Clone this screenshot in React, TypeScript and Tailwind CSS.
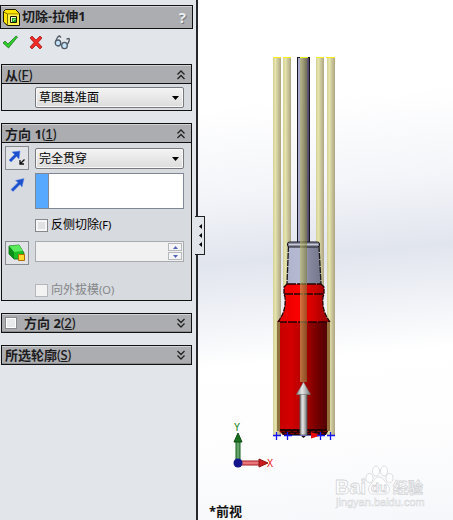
import { useState } from "react";
import type { ReactNode } from "react";

interface SectionProps {
  title: string;
  accessKey: string;
  open: boolean;
  onToggle: () => void;
  checkbox?: boolean;
  children?: ReactNode;
}

function Chevrons({ up }: { up: boolean }) {
  return (
    <svg className="h-[10px] w-[8px]" viewBox="0 0 8 10" fill="none" stroke="#222" strokeWidth="1.3">
      {up ? (
        <path d="M.5 4.5 4 1l3.5 3.5M.5 9 4 5.500l3.500 3.500" />
      ) : (
        <path d="M.5 1 4 4.500 7.500 1M.5 5.500 4 9l3.500-3.500" />
      )}
    </svg>
  );
}

function Section({ title, accessKey, open, onToggle, checkbox, children }: SectionProps) {
  return (
    <section className="border border-[#111] bg-[#d7dade]">
      <div
        className={`flex items-center border-t border-b border-t-[#d0d2d5] bg-[#abadb0] pr-[6px] ${
          open ? "h-[19px] border-b-[#111]" : "h-[18px] border-b-[#8b8d90]"
        }`}
      >
        {checkbox && (
          <input
            type="checkbox"
            aria-label={`${title}(${accessKey})`}
            className="mr-1 ml-[3px] size-[12px] appearance-none border border-[#898b8e] bg-[#e8eaec] shadow-[inset_0_0_0_1px_#fff]"
          />
        )}
        <button
          type="button"
          aria-expanded={open}
          onClick={onToggle}
          className="flex flex-1 items-center justify-between pl-[3px] text-left"
        >
          <span className="text-[13px] leading-[16px] font-bold whitespace-nowrap">
            {title}
            <span className="font-['Lato'] font-semibold">
              (<u>{accessKey}</u>)
            </span>
          </span>
          <Chevrons up={open} />
        </button>
      </div>
      {open && children}
    </section>
  );
}

function Combo({ label, value }: { label: string; value: string }) {
  return (
    <div className="relative min-w-0">
      <select
        aria-label={label}
        className="block h-[21px] w-full appearance-none rounded-[2px] border border-[#77797c] bg-linear-to-b from-[#f4f4f4] to-[#dcdcdc] pl-[3px] text-[12px] leading-[18px] text-black shadow-[inset_0_0_0_1px_#f8f8f8]"
      >
        <option>{value}</option>
      </select>
      <svg className="pointer-events-none absolute top-[9px] right-[5px] h-[4px] w-[7px]" viewBox="0 0 7 4">
        <path d="M0 0h7L3.500 4z" />
      </svg>
    </div>
  );
}

function CutIcon() {
  return (
    <svg className="size-[17px]" viewBox="0 0 17 17">
      <path d="M.5 2.500 2.500.5h10l4 4v12h-12l-4-3.500z" fill="#ffe400" stroke="#1b1800" />
      <path d="M1 3 4.500 5v11M4.500 5h11.500" fill="none" stroke="#7a6a00" />
      <path d="M5 5.500h11v10.500H5z" fill="#fff04a" />
      <path d="M7.500 7.500h6v6h-6z" fill="#f8f6c8" stroke="#151500" />
      <path d="M9 9h4v4H9z" fill="#1f9a28" />
      <path d="M10.500 12v-1.500h2" fill="none" stroke="#8cf08c" />
    </svg>
  );
}

function FlipIcon() {
  return (
    <svg className="size-[18px]" viewBox="0 0 18 18">
      <path d="M1 11 6.500 5.500 4 3l8-1-1 8-2.500-2.500L3 13z" fill="#1c50cc" stroke="#5c86e6" strokeWidth=".5" />
      <path d="m16.500 10.500-4 4m-.5-3.500v4h4" fill="none" stroke="#111" strokeWidth="1.300" />
    </svg>
  );
}

function ArrowIcon() {
  return (
    <svg className="size-[15px]" viewBox="0 0 15 15">
      <path d="M1 12.500 8 5.500 5.500 3.500l8.500-2-2 8.500-2-2.500L3 14.500z" fill="#1c50cc" stroke="#5c86e6" strokeWidth=".5" />
    </svg>
  );
}

function DraftIcon() {
  return (
    <svg className="size-[18px]" viewBox="0 0 18 18">
      <path d="M1 2 11 1l5 8-1 6H6L1 10z" fill="#1cbd24" stroke="#0b6310" strokeWidth=".8" />
      <path d="m1 2 5 6 9-1-4-6z" fill="#5bea5e" />
      <path d="M6 8v7L1 10V2z" fill="#0b8f18" />
      <path d="M10.500 10.500h6v6h-6z" fill="#ffd92e" stroke="#b06d00" />
    </svg>
  );
}

function PropertyPanel() {
  const [open, setOpen] = useState({ from: true, dir1: true, dir2: false, contours: false });
  const toggle = (key: keyof typeof open) => setOpen({ ...open, [key]: !open[key] });

  return (
    <aside className="w-[198px] shrink-0 border-r-2 border-[#26272b] bg-[#e2e5ea] pt-[5px] pr-[3px]">
      <header className="flex h-[24px] items-center border border-[#111] bg-[#abadb0] pr-[6px] pl-[2px] shadow-[inset_0_1px_0_#cfd1d4]">
        <CutIcon />
        <h1 className="flex-1 pl-[2px] text-[13px] font-bold">切除-拉伸1</h1>
        <button
          type="button"
          aria-label="帮助"
          className="text-[15px] leading-[18px] font-bold text-[#eceef0] [text-shadow:1px_1px_0_#77797c]"
        >
          ?
        </button>
      </header>

      {/* OK / cancel / preview */}
      <div className="flex h-[35px] items-start gap-[11px] pt-[6px] pl-[2px]">
        <button type="button" aria-label="确定">
          <svg className="h-[15px] w-[16px]" viewBox="0 0 16 15">
            <path d="m1 8 2-2 3 3 8-8 1.500 1L6.500 13z" fill="#2fd02c" stroke="#126b16" strokeWidth=".7" strokeLinejoin="round" />
          </svg>
        </button>
        <button type="button" aria-label="取消">
          <svg className="h-[15px] w-[14px]" viewBox="0 0 14 15">
            <path
              d="m1 3 2-2 4 4 4-4 2 2-4 4.500 4 4.500-2 2-4-4-4 4-2-2 4-4.500z"
              fill="#ef2a25"
              stroke="#9b1110"
              strokeWidth=".7"
              strokeLinejoin="round"
            />
          </svg>
        </button>
        <button type="button" aria-label="细节预览">
          <svg className="h-[15px] w-[17px]" viewBox="0 0 17 15" fill="none" stroke="#505b66" strokeWidth="1.300">
            <path d="M1.500 8C2 4 4 1 5.500 1L7 2.500M13 10c2-3 3-6 2-6.500L12.500 4M6.500 9l2 1" />
            <ellipse cx="4" cy="8" rx="2.700" ry="3" fill="#c3e4fb" />
            <ellipse cx="10.500" cy="10.500" rx="2.800" ry="3.200" fill="#c3e4fb" />
          </svg>
        </button>
      </div>

      <div className="flex flex-col gap-[12px] px-px">
        <Section title="从" accessKey="F" open={open.from} onToggle={() => toggle("from")}>
          <div className="pt-[3px] pr-[7px] pb-[2px] pl-[33px]">
            <Combo label="从" value="草图基准面" />
          </div>
        </Section>

        <Section title="方向 1" accessKey="1" open={open.dir1} onToggle={() => toggle("dir1")}>
          <div className="grid grid-cols-[24px_minmax(0,1fr)] gap-x-[6px] pt-[3px] pr-[7px] pb-px pl-[3px]">
            <button
              type="button"
              aria-label="反向"
              className="flex size-[24px] items-center justify-center border border-[#888b90] bg-[#e1e3e7]"
            >
              <FlipIcon />
            </button>
            <div className="pt-[2px]">
              <Combo label="终止条件" value="完全贯穿" />
            </div>

            <div className="flex justify-center pt-[7px]">
              <ArrowIcon />
            </div>
            <div className="mt-[3px] flex h-[36px] border border-[#7f8794] bg-white">
              <span className="w-[13px] border-r border-[#7f8794] bg-[#56a9ff]" />
              <textarea aria-label="拉伸方向" className="min-w-0 flex-1 resize-none outline-none" />
            </div>

            <label className="col-start-2 mt-[7px] flex h-[18px] items-center gap-[3px] text-[12px] text-black">
              <input
                type="checkbox"
                className="size-[13px] appearance-none border border-[#85888c] bg-[#dfe1e4] shadow-[inset_0_0_0_2px_#f6f6f6]"
              />
              <span>
                反侧切除<span className="text-[11px]">(F)</span>
              </span>
            </label>

            <button
              type="button"
              aria-label="拔模开/关"
              className="mt-[7px] flex size-[24px] items-center justify-center border border-[#888b90] bg-[#e1e3e7]"
            >
              <DraftIcon />
            </button>
            <div className="mt-[7px] flex h-[21px] border border-[#a8abae] bg-[#f1f1f1] p-px">
              <input aria-label="拔模角度" disabled className="min-w-0 flex-1" />
              <div className="flex w-[14px] flex-col gap-px">
                <button type="button" aria-label="增加" className="flex flex-1 items-center justify-center border border-[#b5b8bc] bg-[#f5f5f5]">
                  <svg className="h-[3px] w-[5px]" viewBox="0 0 5 3">
                    <path d="M0 3h5L2.500 0z" fill="#5366b5" />
                  </svg>
                </button>
                <button type="button" aria-label="减少" className="flex flex-1 items-center justify-center border border-[#b5b8bc] bg-[#f5f5f5]">
                  <svg className="h-[3px] w-[5px]" viewBox="0 0 5 3">
                    <path d="M0 0h5L2.500 3z" fill="#5366b5" />
                  </svg>
                </button>
              </div>
            </div>

            <label className="col-start-2 mt-[16px] flex h-[18px] items-center gap-[3px] text-[12px] text-[#85878a]">
              <input type="checkbox" disabled className="size-[13px] appearance-none border border-[#b5b7ba] bg-[#f3f3f3]" />
              <span>
                向外拔模<span className="text-[11px]">(O)</span>
              </span>
            </label>
          </div>
        </Section>

        <Section title="方向 2" accessKey="2" checkbox open={open.dir2} onToggle={() => toggle("dir2")} />
        <Section title="所选轮廓" accessKey="S" open={open.contours} onToggle={() => toggle("contours")} />
      </div>
    </aside>
  );
}

const outerRods = [273, 327];
const innerRods = [283, 316];
const sketchPoints = [277, 288, 321, 331];

function Viewport() {
  return (
    <svg className="block h-full w-full" viewBox="198 0 255 520" preserveAspectRatio="xMidYMin meet">
      <defs>
        <linearGradient id="rod">
          <stop offset="0" stopColor="#d1cf97" />
          <stop offset=".3" stopColor="#e6e5ac" />
          <stop offset=".6" stopColor="#cbc79a" />
          <stop offset="1" stopColor="#ada383" />
        </linearGradient>
        <linearGradient id="shaft">
          <stop offset="0" stopColor="#b2b2d8" />
          <stop offset=".5" stopColor="#8d8da8" />
          <stop offset="1" stopColor="#4b4268" />
        </linearGradient>
        <linearGradient id="cut">
          <stop offset="0" stopColor="#c2c068" />
          <stop offset="1" stopColor="#7c7a38" />
        </linearGradient>
        <linearGradient id="collar">
          <stop offset="0" stopColor="#b0b4cc" />
          <stop offset=".35" stopColor="#b5b9d2" />
          <stop offset=".65" stopColor="#85889f" />
          <stop offset="1" stopColor="#75778c" />
        </linearGradient>
        <linearGradient id="neck">
          <stop offset="0" stopColor="#e00000" />
          <stop offset=".4" stopColor="#fb0000" />
          <stop offset=".7" stopColor="#d00000" />
          <stop offset="1" stopColor="#900000" />
        </linearGradient>
        <linearGradient id="handle">
          <stop offset="0" stopColor="#c40000" />
          <stop offset=".25" stopColor="#d40000" />
          <stop offset=".5" stopColor="#b00000" />
          <stop offset=".75" stopColor="#780000" />
          <stop offset="1" stopColor="#480000" />
        </linearGradient>
        <linearGradient id="arrow">
          <stop offset="0" stopColor="#8d8d8d" />
          <stop offset=".4" stopColor="#e8e8e8" />
          <stop offset="1" stopColor="#707070" />
        </linearGradient>
      </defs>

      {/* extruded cut preview behind the body */}
      {outerRods.map((x) => (
        <path key={x} d={`M${x} 57h8v378h-8z`} fill="url(#rod)" />
      ))}
      {innerRods.map((x) => (
        <path key={x} d={`M${x} 57h8v230h-8z`} fill="url(#rod)" />
      ))}
      <path d="M273 57.500h8m2 0h8m25 0h8m2 0h9" stroke="#f8ef20" />

      {/* screwdriver */}
      <path d="M297 57h13v185h-13z" fill="#15151b" />
      <path d="M298 58h11v184h-11z" fill="url(#shaft)" />
      <path d="M288.500 246h30.500l2 38h-34z" fill="url(#collar)" />
      <path d="m288.500 246-1.500 38m32-38 2 38" stroke="#17171c" strokeWidth="1.300" strokeDasharray="6 1" />
      <rect x="287.500" y="242" width="32" height="5" rx="2" fill="#8b8da0" stroke="#17171c" />
      <path d="M289 244.500h29" stroke="#c6c8d8" />
      <path d="M287 284h34l3 3v7l-1 3c-1 12 2 19 7 25h-53c6-6 9-13 8-25l-1-3v-7z" fill="url(#neck)" />
      <path
        d="m287 284-3 3v7l1 3c1 11-2 18-7 25m43-38 3 3v7l-1 3c-1 11 2 18 7 25"
        fill="none"
        stroke="#240000"
        strokeWidth="1.300"
        strokeDasharray="5 1"
      />
      <path d="M278 322h51v108l-4 5h-42l-5-5z" fill="url(#handle)" />
      <path d="M287 284h34M284 294h40M278 322h52" stroke="#240000" strokeWidth="1.500" strokeDasharray="9 1" />
      <path d="M279 429h50l-3 6h-43z" fill="#240000" />
      <path d="M281 431.500h46M284 433.500h40" stroke="#7d0000" strokeDasharray="4 2" />

      {/* translucent cut in front of the body */}
      <path d="M300 58h7v324h-7z" fill="url(#cut)" opacity=".6" />
      <path d="M300 57.500h8" stroke="#f8ef20" />
      <path d="M277 322h3v109h-3z" fill="#8f7440" />
      <path d="M327 322h3v109h-3z" fill="#96703a" />

      {/* direction handle */}
      <path d="M300 394h7v41h-7z" fill="url(#arrow)" stroke="#555" strokeWidth=".8" />
      <path d="m303.500 382 7 12.500h-14z" fill="url(#arrow)" stroke="#777" strokeWidth=".6" />
      <path d="M300 435h7l-3.500 3z" fill="#111" />
      <path d="M288 435.500h32" stroke="#6a6ab8" />
      <path d="m311 432 10 3.500-10 3z" fill="#e80c0c" />
      {sketchPoints.map((x) => (
        <path key={x} d={`M${x - 4} 435.500h8M${x - 0.5} 432v8`} stroke="#1414f0" strokeWidth="1.300" />
      ))}

      {/* axis triad */}
      <path d="M236 441h4v20h-4z" fill="#63a36a" stroke="#14601b" />
      <path d="m238 433 4 9h-8z" fill="#17711e" stroke="#0d4a12" />
      <path d="M240 461h20v4h-20z" fill="#e8767b" stroke="#a61b20" />
      <path d="m268 463-9-4v8z" fill="#c91d20" stroke="#8d1215" />
      <circle cx="238" cy="463" r="4.500" fill="#14148c" />
      <text x="234" y="431" fontSize="10" fill="#16861c" className="font-['DejaVu_Sans_Mono']">
        Y
      </text>
      <text x="267" y="467" fontSize="10" fill="#ec2222" className="font-['DejaVu_Sans_Mono']">
        X
      </text>
      <text x="209" y="516" fontSize="13" fontWeight="700" fill="#111">
        *前视
      </text>

      {/* watermark */}
      <g fill="#fff" stroke="#d3d5d8" strokeWidth=".8">
        <text x="335" y="494" fontSize="20" fontWeight="700" className="font-['Liberation_Sans']">
          Bai
        </text>
        <ellipse cx="369.500" cy="478" rx="3.500" ry="4.500" />
        <ellipse cx="376" cy="471" rx="3.500" ry="5" />
        <ellipse cx="384" cy="471" rx="3.500" ry="5" />
        <ellipse cx="389.500" cy="478" rx="3.500" ry="4.500" />
        <path d="M379 477c4 0 5 4 8 7 4 4 3 10-2 10h-12c-5 0-6-6-2-10 3-3 4-7 8-7z" />
        <text x="371" y="492" fontSize="13" fontWeight="700" className="font-['Liberation_Sans']">
          du
        </text>
        <text x="393" y="493" fontSize="15" fontWeight="700">
          经验
        </text>
        <text x="336" y="506" fontSize="11" strokeWidth=".5" className="font-['Liberation_Sans']">
          jingyan.baidu.com
        </text>
      </g>
    </svg>
  );
}

export default function App() {
  return (
    <div className="flex min-h-screen font-['Noto_Sans','Noto_Sans_CJK_SC',sans-serif] text-[#1c1c1e]">
      <PropertyPanel />
      <main className="relative min-w-0 flex-1 bg-[linear-gradient(175deg,#fff_20%,#f4f5f9_36%,#e1e5ee_49%,#eff1f6_58%,#fff_68%,#fdfdfe_85%,#f5f7fa)]">
        {/* panel collapse tab */}
        <button
          type="button"
          aria-label="折叠面板"
          className="absolute top-[216px] -left-[3px] flex h-[39px] w-[10px] flex-col items-end justify-center gap-[4px] border border-l-0 border-[#222] bg-[#e2e5ea] pr-[2px]"
        >
          {[0, 1, 2].map((i) => (
            <svg key={i} className="h-[5px] w-[3px]" viewBox="0 0 3 5">
              <path d="M3 0v5L0 2.500z" />
            </svg>
          ))}
        </button>
        <Viewport />
      </main>
    </div>
  );
}
